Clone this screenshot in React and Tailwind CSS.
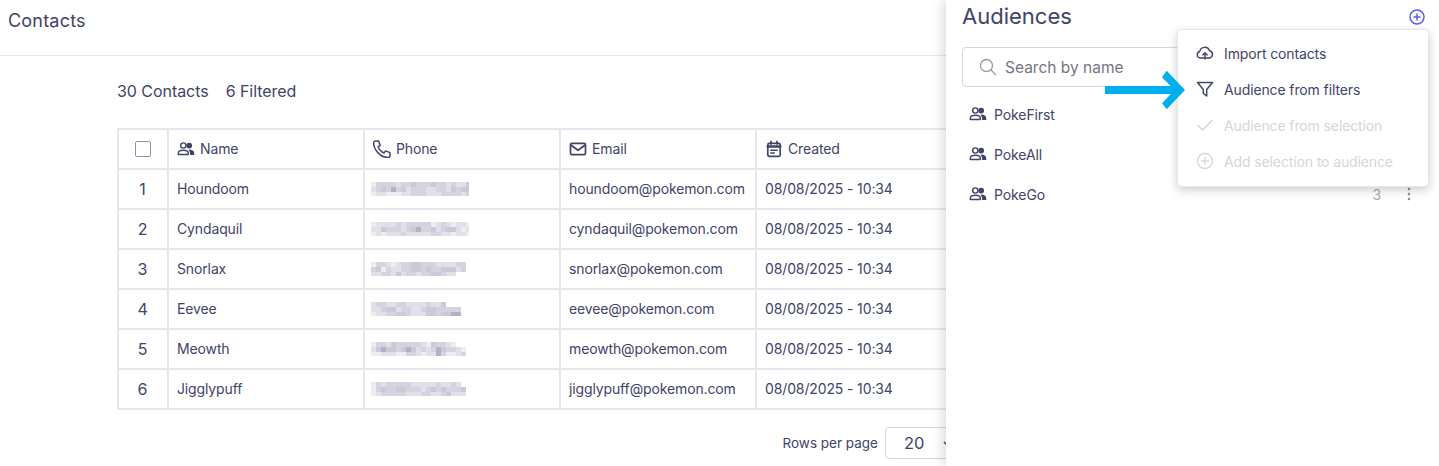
import React from "react";

const rows = [
  ["Houndoom", "houndoom@pokemon.com"],
  ["Cyndaquil", "cyndaquil@pokemon.com"],
  ["Snorlax", "snorlax@pokemon.com"],
  ["Eevee", "eevee@pokemon.com"],
  ["Meowth", "meowth@pokemon.com"],
  ["Jigglypuff", "jigglypuff@pokemon.com"],
];

const mosaics = [
  ["13333233433343323224", "23435342333223324344", "12211122333222333323"],
  ["12222323333312321221", "22433323453342344212", "12122232222233221221"],
  ["13321233443332222330", "34132233443433444230", "22332423323344322000"],
  ["23322332222322400000", "22344233223443333300", "12233443222443445500"],
  ["13324333332143321000", "24544345423235433210", "11222113321225311230"],
  ["13233333222223223200", "13433443332343433340", "12333332223322342220"],
];

const shades = ["#ffffff", "#ececf2", "#e0e0e9", "#d4d4e0", "#c9c9d8", "#b2b2c6"];

function Mosaic({ code }) {
  return (
    <svg width="98" height="14" className="block -ml-[2px]">
      {code.map((row, r) =>
        row.split("").map((c, i) => (
          <rect key={`${r}-${i}`} x={i * 5} y={r * 5} width="5" height={r === 2 ? 4 : 5} fill={shades[+c]} />
        ))
      )}
    </svg>
  );
}

function People() {
  return (
    <svg width="18" height="18" viewBox="0 0 18 18" fill="none" className="shrink-0">
      <circle cx="6.3" cy="5.500" r="2.600" stroke="currentColor" strokeWidth="1.400" />
      <path d="M1.300 14.500v-1.200c0-1.800 2.200-3 5-3s5 1.200 5 3v1.200z" stroke="currentColor" strokeWidth="1.400" strokeLinejoin="round" />
      <circle cx="12.200" cy="5.600" r="2.900" fill="currentColor" />
      <path d="M12.500 9.600c2.400.2 4.700 1.400 4.700 3.400v2h-4.100c0-2.200-.2-3.700-1.600-5.100z" fill="currentColor" />
    </svg>
  );
}

function Phone() {
  return (
    <svg width="18" height="18" viewBox="0 0 18 18" fill="none" stroke="currentColor" strokeWidth="1.500" strokeLinecap="round" strokeLinejoin="round" className="shrink-0">
      <path d="M2.600 1h2.900l1.700 4.300-2.100 1.500c1 2.800 3.100 5.100 5.900 6.200l1.600-2.100 4.400 1.700v2.800c0 1.200-1 2.100-2.100 2.100C7.600 17.500.6 10 .6 3.100 .6 1.900 1.500 1 2.600 1z" />
    </svg>
  );
}

function Mail() {
  return (
    <svg width="18" height="18" viewBox="0 0 18 18" fill="none" stroke="currentColor" strokeWidth="1.700" strokeLinejoin="round" className="shrink-0">
      <rect x="1.500" y="3.300" width="15" height="11.400" rx="1.500" />
      <path d="M1.800 5l7.200 5.300L16.200 5" />
    </svg>
  );
}

function Calendar() {
  return (
    <svg width="18" height="18" viewBox="0 0 18 18" fill="none" stroke="currentColor" strokeWidth="1.700" strokeLinecap="round" className="shrink-0">
      <rect x="2.800" y="3.300" width="12.400" height="13" rx="1.500" />
      <path d="M2.800 6.500h12.400" strokeWidth="2.600" />
      <path d="M6 1.300v2.600M12 1.300v2.600" />
      <path d="M5.800 10.300h6.400M5.800 13h3.500" strokeWidth="1.500" />
    </svg>
  );
}

function Th({ icon, label, w }) {
  return (
    <div className={`${w} h-full shrink-0 flex items-center gap-[5px] pl-[8px] border-r-2 border-[#e6e6ec] pb-px`}>
      {icon}
      <span>{label}</span>
    </div>
  );
}

function Td({ w, children }) {
  return <div className={`${w} h-full shrink-0 flex items-center pl-[8px] pb-px border-r-2 border-[#e6e6ec]`}>{children}</div>;
}

function AudienceRow({ name, count }) {
  return (
    <div className="h-[40px] flex items-center pl-[7px] pr-[12px] gap-[7px] tracking-[-0.1px]">
      <People />
      <span className="flex-1 text-[14px]">{name}</span>
      {count && <span className="text-[14px] text-[#a9a9b4] mr-[19px]">{count}</span>}
      {count && (
        <svg width="4" height="14" viewBox="0 0 4 14" fill="#8b8b9c" className="mr-[6px]">
          <circle cx="2" cy="2" r="1.300" />
          <circle cx="2" cy="7" r="1.300" />
          <circle cx="2" cy="12" r="1.300" />
        </svg>
      )}
    </div>
  );
}

function MenuItem({ icon, label, disabled }) {
  return (
    <div className={`h-[36px] flex items-center gap-[10px] pl-[18px] text-[14px] tracking-[-0.12px] ${disabled ? "text-[#d5d5dc]" : "text-[#414369]"}`}>
      <span className="w-[18px] h-[18px] flex items-center justify-center">{icon}</span>
      <span>{label}</span>
    </div>
  );
}

export default function App() {
  return (
    <div className="relative h-[466px] w-[1439px] overflow-hidden bg-white text-[#414369] font-['Inter','Noto_Sans',sans-serif]">
      <div className="h-[56px] border-b border-[#e6e6ec] pl-[8px] pt-[10px] text-[18px] tracking-[0.2px] leading-[22px]">Contacts</div>

      <div className="pl-[117px] pt-[24px]">
        <div className="flex gap-[17px] text-[16px] leading-[22px] tracking-[-0.05px]">
          <span>30 Contacts</span>
          <span>6 Filtered</span>
        </div>

        <div className="mt-[26px] w-[1000px] border-2 border-b-0 border-r-0 border-[#e6e6ec] text-[14px] tracking-[-0.13px]">
          <div className="flex h-[40px] border-b-2 border-[#e6e6ec]">
            <div className="w-[50px] h-full shrink-0 flex items-center justify-center border-r-2 border-[#e6e6ec]">
              <div className="w-[16px] h-[16px] rounded-[2px] border border-[#8d8ea5]" />
            </div>
            <Th w="w-[196px]" label="Name" icon={<People />} />
            <Th w="w-[196px]" label="Phone" icon={<Phone />} />
            <Th w="w-[196px]" label="Email" icon={<Mail />} />
            <Th w="w-[196px]" label="Created" icon={<Calendar />} />
          </div>
          {rows.map(([name, email], i) => (
            <div key={name} className="flex h-[40px] border-b-2 border-[#e6e6ec]">
              <div className="w-[50px] h-full shrink-0 flex items-center justify-center border-r-2 border-[#e6e6ec] text-[16px] pr-px">{i + 1}</div>
              <Td w="w-[196px]">{name}</Td>
              <Td w="w-[196px]"><Mosaic code={mosaics[i]} /></Td>
              <Td w="w-[196px]">{email}</Td>
              <Td w="w-[196px]">08/08/2025 - 10:34</Td>
            </div>
          ))}
        </div>

        <div className="mt-[17px] w-[838px] flex justify-end items-center gap-[7px] text-[13.5px]">
          <span>Rows per page</span>
          <div className="w-[70px] h-[32px] rounded-[4px] border border-[#d5d5de] flex items-center pl-[18px] text-[16.5px] shrink-0 relative">
            20
            <svg width="10" height="6" viewBox="0 0 10 6" fill="none" stroke="#414369" strokeWidth="1.500" className="absolute left-[57px] top-[13px]">
              <path d="M1 1l4 4 4-4" />
            </svg>
          </div>
        </div>
      </div>

      {/* Side panel */}
      <div className="absolute top-0 left-[946px] right-0 bottom-0 bg-white shadow-[-4px_0_10px_rgba(30,30,60,0.14)] pl-[16px] pr-[10px]">
        <div className="flex items-center justify-between h-[33px] text-[22px] pr-[4px]">
          <span>Audiences</span>
          <svg width="16" height="16" viewBox="0 0 16 16" fill="none" stroke="#5b5bf0" strokeWidth="1.500" strokeLinecap="round" className="mt-px">
            <circle cx="8" cy="8" r="7" />
            <path d="M8 5v6M5 8h6" />
          </svg>
        </div>
        <div className="mt-[14px] h-[40px] w-[300px] rounded-[4px] border border-[#d5d5de] flex items-center pl-[16px] gap-[8px] text-[15.5px] text-[#75757f]">
          <svg width="18" height="18" viewBox="0 0 18 18" fill="none" stroke="#9a9aa6" strokeWidth="1.300" strokeLinecap="round">
            <circle cx="7.500" cy="7.500" r="6" />
            <path d="M12 12l4.500 4.500" />
          </svg>
          <span className="pt-px">Search by name</span>
        </div>
        <div className="mt-[7px]">
          <AudienceRow name="PokeFirst" />
          <AudienceRow name="PokeAll" />
          <AudienceRow name="PokeGo" count="3" />
        </div>
      </div>

      {/* Dropdown */}
      <div className="absolute left-[1177px] top-[29px] w-[252px] h-[158px] py-[5px] bg-white rounded-[4px] border border-[#e6e6ec] shadow-[0_3px_10px_rgba(30,30,60,0.22)]">
        <MenuItem label="Import contacts" icon={
          <svg width="18" height="18" viewBox="0 0 18 18" fill="none" stroke="currentColor" strokeWidth="1.400" strokeLinecap="round" strokeLinejoin="round">
            <path d="M5.500 14H4.300a3.300 3.300 0 0 1-.5-6.500 5 5 0 0 1 9.700-.7 3.700 3.700 0 0 1 .2 7.200H12.500z" />
            <path d="M9 15V9M6.800 11L9 8.800 11.200 11" />
          </svg>
        } />
        <MenuItem label="Audience from filters" icon={
          <svg width="18" height="18" viewBox="0 0 18 18" fill="none" stroke="currentColor" strokeWidth="1.500" strokeLinejoin="round">
            <path d="M1.500 2.500h15L10.700 9.500v6.500l-3.400-2.500v-4z" />
          </svg>
        } />
        <MenuItem disabled label="Audience from selection" icon={
          <svg width="18" height="18" viewBox="0 0 18 18" fill="none" stroke="currentColor" strokeWidth="1.500" strokeLinecap="round" strokeLinejoin="round">
            <path d="M2 9.500L6.500 14 16 4.500" />
          </svg>
        } />
        <MenuItem disabled label="Add selection to audience" icon={
          <svg width="18" height="18" viewBox="0 0 18 18" fill="none" stroke="currentColor" strokeWidth="1.300" strokeLinecap="round">
            <circle cx="9" cy="9" r="7.500" />
            <path d="M9 5.500v7M5.500 9h7" />
          </svg>
        } />
      </div>

      {/* Annotation arrow */}
      <svg width="80" height="44" viewBox="0 0 80 44" className="absolute left-[1105px] top-[68px]">
        <path d="M0 18h70v8H0z" fill="#00b0ec" />
        <path d="M61.700 2.700L57 9.300 69.700 22 57 35.300l4.700 6L80 22z" fill="#00b0ec" />
      </svg>
    </div>
  );
}
